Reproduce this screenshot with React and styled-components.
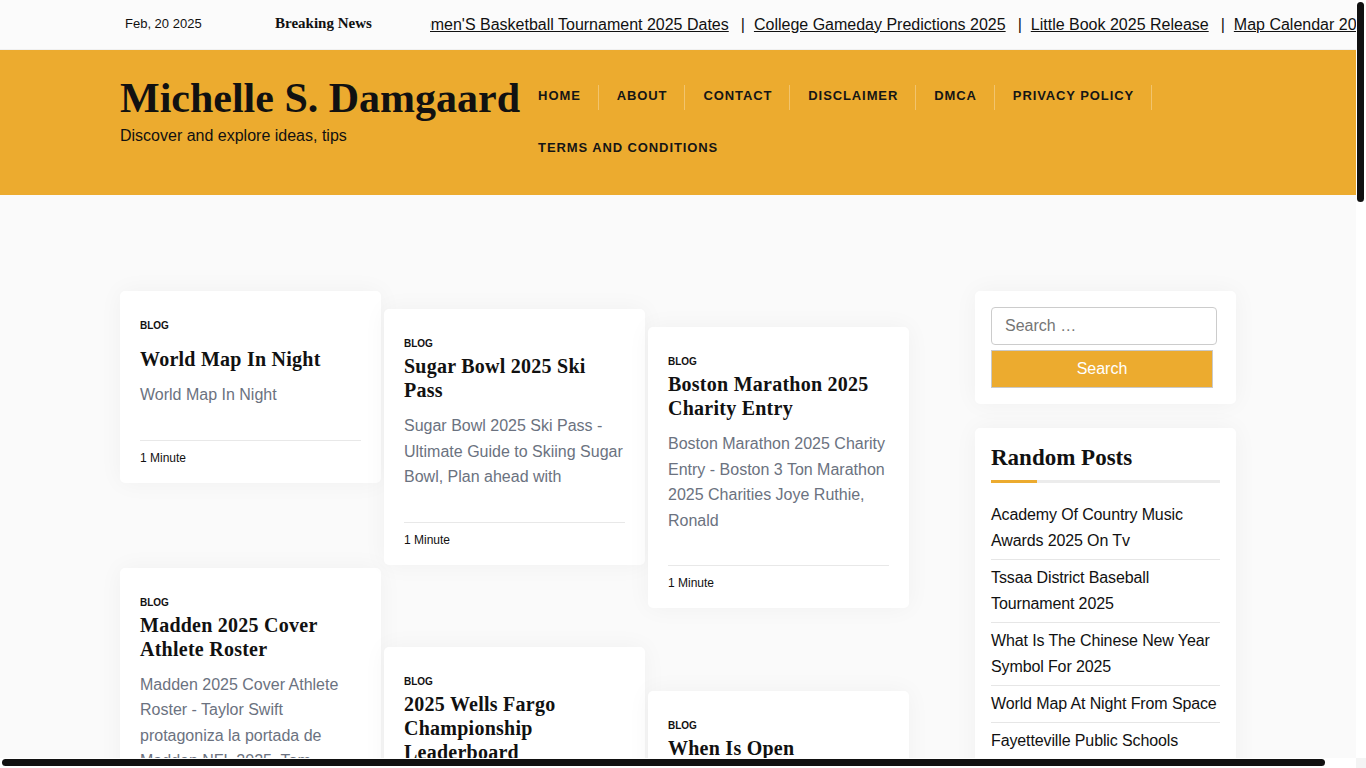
import styled, { createGlobalStyle } from 'styled-components'

const GlobalStyle = createGlobalStyle`
    html, body {
        margin: 0;
        padding: 0;
    }
    body {
        background: #fafafa;
        font-family: "Liberation Sans", Arial, sans-serif;
        color: #111;
        overflow-x: hidden;
    }
`

const ORANGE = '#ecab2f'
const SERIF = '"Liberation Serif", "Times New Roman", serif'

const Page = styled.div`
    width: 1356px;
    overflow: hidden;
`

const Container = styled.div`
    width: 1116px;
    margin: 0 auto;
`

/* scrollbars drawn over the page, as in the capture */

const VTrack = styled.div`
    position: fixed;
    top: 0;
    right: 0;
    width: 10px;
    height: 758px;
    background: #fff;
`

const VThumb = styled.div`
    margin: 2px 0 0 1px;
    width: 7px;
    height: 200px;
    border-radius: 4px;
    background: #111;
`

const HTrack = styled.div`
    position: fixed;
    left: 0;
    bottom: 0;
    width: 1356px;
    height: 10px;
    background: #fff;
`

const HThumb = styled.div`
    margin: 1px 0 0 2px;
    width: 1323px;
    height: 7px;
    border-radius: 4px;
    background: #111;
`

const Corner = styled.div`
    position: fixed;
    right: 0;
    bottom: 0;
    width: 10px;
    height: 10px;
    background: #f4f4f4;
`

/* top bar */

const TopBar = styled.div`
    height: 50px;
    background: #fbfbfb;
    border-bottom: 1px solid #f0f0f0;
    box-sizing: border-box;
`

const TopInner = styled(Container)`
    display: flex;
    align-items: center;
    height: 100%;
`

const DateBox = styled.div`
    flex: none;
    width: 150px;
    padding-left: 5px;
    box-sizing: border-box;
    font-size: 13px;
    margin-top: -3px;
`

const BreakingLabel = styled.div`
    flex: none;
    width: 160px;
    padding-left: 5px;
    box-sizing: border-box;
    font-family: ${SERIF};
    font-weight: 700;
    font-size: 15px;
    margin-top: -3px;
`

const TickerViewport = styled.div`
    flex: none;
    width: 960px;
    overflow: hidden;
`

const TickerTrack = styled.div`
    display: flex;
    white-space: nowrap;
    transform: translateX(-23px);
    font-size: 16px;
`

const TickerLink = styled.a`
    color: #111;
    text-decoration: underline;
`

const TickerSep = styled.span`
    margin: 0 9px 0 12px;
`

/* header */

const Header = styled.header`
    background: ${ORANGE};
    padding: 19px 0 21px;
`

const HeaderInner = styled(Container)`
    display: flex;
    align-items: flex-start;
`

const Branding = styled.div`
    flex: none;
    padding-top: 4px;
`

const SiteTitle = styled.h1`
    margin: 0;
    font-family: ${SERIF};
    font-weight: 700;
    font-size: 42px;
    line-height: 50px;
    color: #111;
`

const Tagline = styled.p`
    margin: 1px 0 0;
    font-size: 16px;
    line-height: 24px;
`

const Nav = styled.nav`
    flex: 1;
    display: flex;
    flex-wrap: wrap;
    align-content: flex-start;
    padding-top: 1px;
`

const NavItem = styled.a`
    position: relative;
    padding: 0 18px;
    line-height: 52px;
    font-size: 13px;
    font-weight: 700;
    letter-spacing: 0.9px;
    text-transform: uppercase;
    color: #151515;
    text-decoration: none;

    &::after {
        content: '';
        display: ${p => (p.$last ? 'none' : 'block')};
        position: absolute;
        right: 0;
        top: 15px;
        height: 25px;
        width: 1px;
        background: rgba(255, 255, 255, 0.3);
    }
`

/* main */

const Main = styled(Container)`
    display: grid;
    grid-template-columns: 789px 261px;
    justify-content: space-between;
    align-items: start;
    padding: 96px 0 90px;
`

const PostGrid = styled.div`
    display: grid;
    grid-template-columns: repeat(3, 261px);
    column-gap: 3px;
    align-items: start;
`

const Column = styled.div`
    display: flex;
    flex-direction: column;
    gap: ${p => p.$gap}px;
    padding-top: ${p => p.$offset}px;
`

const Card = styled.article`
    background: #fff;
    border-radius: 5px;
    box-shadow: 0 0 24px rgba(0, 0, 0, 0.045);
    padding: 27px 20px 16px;
`

const Category = styled.div`
    font-size: 10px;
    line-height: 16px;
    font-weight: 700;
    text-transform: uppercase;
`

const PostTitle = styled.h2`
    margin: ${p => (p.$spaced ? 13 : 2)}px 0 0;
    font-family: ${SERIF};
    font-size: 20px;
    line-height: 24px;
    letter-spacing: 0.25px;
    font-weight: 700;
    color: #111;
`

const Excerpt = styled.p`
    margin: 11px 0 32px;
    font-size: 16px;
    line-height: 25.5px;
    color: #6b7280;
`

const CardFoot = styled.div`
    border-top: 1px solid #e8e8e8;
    padding-top: 8px;
    font-size: 12px;
    line-height: 18px;
`

/* sidebar */

const Sidebar = styled.aside`
    display: flex;
    flex-direction: column;
    gap: 24px;
`

const Widget = styled.section`
    background: #fff;
    border-radius: 5px;
    box-shadow: 0 0 24px rgba(0, 0, 0, 0.045);
    padding: 16px;
`

const SearchInput = styled.input`
    display: block;
    width: 226px;
    height: 38px;
    box-sizing: border-box;
    border: 1px solid #ccc;
    border-radius: 4px;
    padding: 0 13px;
    font-family: inherit;
    font-size: 16px;
    color: #111;
    background: #fff;

    &::placeholder {
        color: #757575;
    }
`

const SearchButton = styled.button`
    display: block;
    width: 222px;
    height: 38px;
    margin-top: 5px;
    background: ${ORANGE};
    border: 1px solid #c9c9c9;
    color: #fff;
    font-family: inherit;
    font-size: 16px;
`

const WidgetTitle = styled.h2`
    position: relative;
    margin: 0;
    padding: 1px 0 12px;
    font-family: ${SERIF};
    font-size: 23px;
    line-height: 26px;
    font-weight: 700;

    &::before, &::after {
        content: '';
        position: absolute;
        left: 0;
        bottom: 0;
        height: 3px;
    }
    &::before {
        right: 0;
        background: #ececec;
    }
    &::after {
        width: 46px;
        background: ${ORANGE};
    }
`

const PostList = styled.ul`
    list-style: none;
    margin: 14px 0 0;
    padding: 0;
`

const PostListItem = styled.li`
    padding: 5px 0 5px;
    border-bottom: 1px solid #e6e6e6;
    font-size: 16px;
    line-height: 26px;
    letter-spacing: -0.12px;

    &:last-child {
        border-bottom: none;
    }
`

const PostLink = styled.a`
    color: #111;
    text-decoration: none;
`

/* footer */

const Footer = styled.footer`
    background: ${ORANGE};
    padding: 28px 0;
    font-size: 14px;
    text-align: center;
`

const tickerItems = [
    "Women'S Basketball Tournament 2025 Dates",
    'College Gameday Predictions 2025',
    'Little Book 2025 Release',
    'Map Calendar 2025 Printable',
]

const navItems = ['Home', 'About', 'Contact', 'Disclaimer', 'DMCA', 'Privacy Policy', 'Terms and Conditions']

const columns = [
    {
        offset: 0,
        gap: 85,
        posts: [
            { title: 'World Map In Night', excerpt: 'World Map In Night', spaced: true },
            { title: 'Madden 2025 Cover Athlete Roster', excerpt: 'Madden 2025 Cover Athlete Roster - Taylor Swift protagoniza la portada de Madden NFL 2025, Tom' },
            { title: 'Printable Calendar 2025 Monthly', excerpt: 'Printable Calendar 2025 Monthly - Free Printable 2025 Monthly Calendar' },
            { title: 'Nba Draft Lottery 2025 Odds', excerpt: 'Nba Draft Lottery 2025 Odds - 2025 NBA Draft Lottery Odds, Tanking' },
            { title: 'Map Of United States Capitals', excerpt: 'Map Of United States Capitals' },
            { title: 'Honda Civic 2025 Hybrid Price', excerpt: 'Honda Civic 2025 Hybrid Price - New Civic Hybrid Sedan Arrives' },
        ],
    },
    {
        offset: 18,
        gap: 82,
        posts: [
            { title: 'Sugar Bowl 2025 Ski Pass', excerpt: 'Sugar Bowl 2025 Ski Pass - Ultimate Guide to Skiing Sugar Bowl, Plan ahead with' },
            { title: '2025 Wells Fargo Championship Leaderboard', excerpt: '2025 Wells Fargo Championship Leaderboard - Final Round Tee Times' },
            { title: 'Easter Sunday 2025 Date', excerpt: 'Easter Sunday 2025 Date - When Is Easter 2025, Holy Week Dates' },
            { title: 'World Map With Latitude', excerpt: 'World Map With Latitude' },
            { title: 'Kentucky Derby 2025 Post Time', excerpt: 'Kentucky Derby 2025 Post Time - Race Day Schedule And Odds' },
            { title: 'Fall Break 2025 Schools', excerpt: 'Fall Break 2025 Schools - School Calendar 2025 Holidays' },
        ],
    },
    {
        offset: 36,
        gap: 83,
        posts: [
            { title: 'Boston Marathon 2025 Charity Entry', excerpt: 'Boston Marathon 2025 Charity Entry - Boston 3 Ton Marathon 2025 Charities Joye Ruthie, Ronald' },
            { title: 'When Is Open Enrollment 2025', excerpt: 'When Is Open Enrollment 2025 - Open Enrollment Period Dates And Deadlines' },
            { title: 'Map Of Europe 1914', excerpt: 'Map Of Europe 1914' },
            { title: 'Super Bowl 2025 Halftime Show', excerpt: 'Super Bowl 2025 Halftime Show - Kendrick Lamar Headlines In New Orleans' },
            { title: 'Tax Brackets 2025 Married', excerpt: 'Tax Brackets 2025 Married - Federal Income Tax Rates' },
            { title: 'Memorial Day 2025 Sales', excerpt: 'Memorial Day 2025 Sales - Best Deals This Weekend' },
        ],
    },
]

const randomPosts = [
    'Academy Of Country Music Awards 2025 On Tv',
    'Tssaa District Baseball Tournament 2025',
    'What Is The Chinese New Year Symbol For 2025',
    'World Map At Night From Space',
    'Fayetteville Public Schools Calendar',
    'Nfl Playoff Schedule 2025',
    'Map Of The Caribbean Islands',
    'Spring Break 2025 Texas',
    'Oscars 2025 Best Picture Nominees',
    'Printable Map Of Florida',
]

const PostCard = ({ post }) => (
    <Card>
        <Category>Blog</Category>
        <PostTitle $spaced={post.spaced}>{post.title}</PostTitle>
        <Excerpt>{post.excerpt}</Excerpt>
        <CardFoot>1 Minute</CardFoot>
    </Card>
)

export default function App() {
    return (
        <Page>
            <GlobalStyle />
            <TopBar>
                <TopInner>
                    <DateBox>Feb, 20 2025</DateBox>
                    <BreakingLabel>Breaking News</BreakingLabel>
                    <TickerViewport>
                        <TickerTrack>
                            {tickerItems.map((item, index) => (
                                <span key={index}>
                                    {index > 0 && <TickerSep>|</TickerSep>}
                                    <TickerLink href="#">{item}</TickerLink>
                                </span>
                            ))}
                        </TickerTrack>
                    </TickerViewport>
                </TopInner>
            </TopBar>

            <Header>
                <HeaderInner>
                    <Branding>
                        <SiteTitle>Michelle S. Damgaard</SiteTitle>
                        <Tagline>Discover and explore ideas, tips</Tagline>
                    </Branding>
                    <Nav>
                        {navItems.map((item, index) => (
                            <NavItem key={item} href="#" $last={index === navItems.length - 1}>
                                {item}
                            </NavItem>
                        ))}
                    </Nav>
                </HeaderInner>
            </Header>

            <Main>
                <PostGrid>
                    {columns.map((col, index) => (
                        <Column key={index} $offset={col.offset} $gap={col.gap}>
                            {col.posts.map(post => (
                                <PostCard key={post.title} post={post} />
                            ))}
                        </Column>
                    ))}
                </PostGrid>

                <Sidebar>
                    <Widget>
                        <SearchInput type="search" placeholder="Search …" />
                        <SearchButton>Search</SearchButton>
                    </Widget>
                    <Widget>
                        <WidgetTitle>Random Posts</WidgetTitle>
                        <PostList>
                            {randomPosts.map(item => (
                                <PostListItem key={item}>
                                    <PostLink href="#">{item}</PostLink>
                                </PostListItem>
                            ))}
                        </PostList>
                    </Widget>
                </Sidebar>
            </Main>

            <Footer>Copyright © 2025 Michelle S. Damgaard. All rights reserved.</Footer>

            <VTrack><VThumb /></VTrack>
            <HTrack><HThumb /></HTrack>
            <Corner />
        </Page>
    )
}
